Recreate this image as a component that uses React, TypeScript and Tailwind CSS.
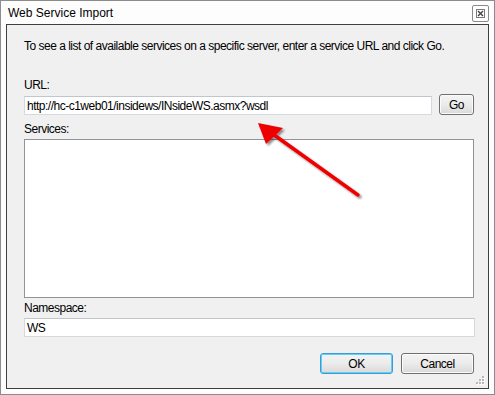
import React from "react";

const font = { fontFamily: '"Liberation Sans", Arial, sans-serif' };

function Grip() {
  const dots: [number, number][] = [
    [6, 0],
    [3, 3],
    [6, 3],
    [0, 6],
    [3, 6],
    [6, 6],
  ];
  return (
    <svg width="9" height="9" viewBox="0 0 9 9" className="absolute right-[3px] bottom-[3px]">
      {dots.map(([x, y], i) => (
        <g key={i}>
          <rect x={x + 1} y={y + 1} width="2" height="2" fill="#ffffff" />
          <rect x={x} y={y} width="2" height="2" fill="#b8b8b8" />
        </g>
      ))}
    </svg>
  );
}

function Arrow() {
  return (
    <svg
      width="495"
      height="395"
      viewBox="0 0 495 395"
      className="absolute left-0 top-0 pointer-events-none"
    >
      <defs>
        <filter id="sh" x="-20%" y="-20%" width="140%" height="140%">
          <feGaussianBlur in="SourceAlpha" stdDeviation="1.2" />
          <feOffset dx="1.5" dy="1.5" result="b" />
          <feComponentTransfer>
            <feFuncA type="linear" slope="0.45" />
          </feComponentTransfer>
          <feMerge>
            <feMergeNode />
            <feMergeNode in="SourceGraphic" />
          </feMerge>
        </filter>
      </defs>
      <g filter="url(#sh)">
        <line x1="358" y1="195" x2="270" y2="132" stroke="#ee0000" strokeWidth="3.4" strokeLinecap="round" />
        <polygon points="258,123 283,128 266,144" fill="#ee0000" />
      </g>
    </svg>
  );
}

function Btn({ children, def }: { children: React.ReactNode; def?: boolean }) {
  return (
    <div
      className={
        "flex items-center justify-center h-[21px] rounded-[3px] border text-[12px] text-black bg-gradient-to-b from-[#f4f4f4] via-[#ebebeb] to-[#d9d9d9] " +
        (def ? "border-[#3c9ad6] shadow-[inset_0_0_0_1px_#5fd1f5]" : "border-[#707070] shadow-[inset_0_0_0_1px_#fbfbfb]")
      }
    >
      {children}
    </div>
  );
}

export default function App() {
  return (
    <div className="relative w-[495px] h-[395px] bg-white" style={font}>
      <div className="w-[495px] h-[395px] border border-[#8c8c8c] flex flex-col px-[5px] pb-[5px] bg-[#fdfdfd]">
        <div className="h-[23px] flex items-center justify-between shrink-0">
          <span className="text-[12px] text-black pl-[2px] leading-[16px]">Web Service Import</span>
          <div className="w-[17px] h-[17px] mt-[2px] border border-[#8a8a8a] rounded-[2px] bg-white flex items-center justify-center">
            <svg width="9" height="9" viewBox="0 0 9 9">
              <rect x="0.5" y="0.5" width="8" height="8" fill="none" stroke="#7a7a7a" />
              <path d="M2 2 L7 7 M7 2 L2 7" stroke="#404040" strokeWidth="1.4" />
            </svg>
          </div>
        </div>
        <div className="relative flex-1 border border-[#3f3f3f] bg-[#f0f0f0] pl-[17px] pr-[14px] flex flex-col text-[12px] leading-[16px] text-black tracking-[-0.5px]">
          <div className="mt-[13px] whitespace-nowrap">
            To see a list of available services on a specific server, enter a service URL and click Go.
          </div>
          <div className="mt-[23px]">URL:</div>
          <div className="mt-[1px] flex items-end gap-[7px]">
            <div className="flex-1 h-[19px] bg-white border border-[#d3d9df] border-t-[#c0c6cc] flex items-center pl-[2px] whitespace-nowrap">
              http://hc-c1web01/insidews/INsideWS.asmx?wsdl
            </div>
            <div className="w-[35px]">
              <Btn>Go</Btn>
            </div>
          </div>
          <div className="mt-[6px]">Services:</div>
          <div className="mt-[2px] h-[159px] bg-white border border-[#8f949a]" />
          <div className="mt-[2px]">Namespace:</div>
          <div className="mt-[2px] h-[19px] bg-white border border-[#d3d9df] border-t-[#c0c6cc] flex items-center pl-[2px] mr-[-1px]">
            WS
          </div>
          <div className="mt-[16px] flex justify-end gap-[8px]">
            <div className="w-[73px]">
              <Btn def>OK</Btn>
            </div>
            <div className="w-[73px]">
              <Btn>Cancel</Btn>
            </div>
          </div>
          <Grip />
        </div>
      </div>
      <Arrow />
    </div>
  );
}
